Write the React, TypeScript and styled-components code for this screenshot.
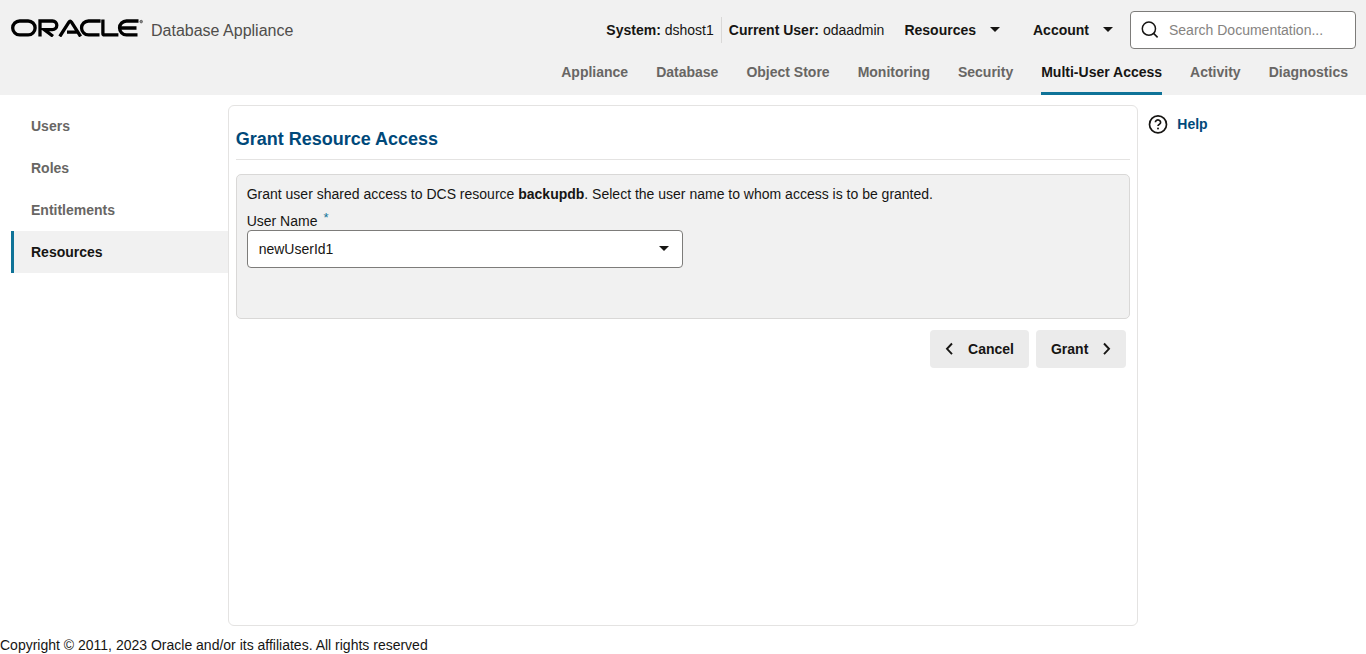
import React from "react";
import styled, { createGlobalStyle } from "styled-components";

const GlobalStyle = createGlobalStyle`
  *, *::before, *::after { box-sizing: border-box; }
  body {
    margin: 0;
    background: #fff;
    color: #161513;
    font-family: "Liberation Sans", Arial, sans-serif;
    font-size: 14px;
    line-height: 20px;
  }
  button, input, select { font: inherit; color: inherit; }
`;

const Page = styled.div`
  display: flex;
  flex-direction: column;
  min-height: 100vh;
`;

const Header = styled.header`
  background: #f1f1f1;
`;

const TopBar = styled.div`
  display: flex;
  justify-content: space-between;
  padding: 11px 10px 0 11px;
`;

const Brand = styled.div`
  display: flex;
  align-items: center;
  gap: 8px;
  height: 38px;
`;

const Logo = styled.svg`
  display: block;
  margin-bottom: 4px;
`;

const ProductName = styled.span`
  padding-top: 2px;
  color: #4f4d4b;
  font-size: 16px;
`;

const Tools = styled.div`
  display: flex;
  align-items: center;
`;

const Fact = styled.span<{ $divided?: boolean }>`
  padding: 3px 7px;
  border-right: ${(p) => (p.$divided ? "1px solid #d9d8d7" : "0")};
`;

const MenuButton = styled.button`
  display: flex;
  align-items: center;
  gap: 13px;
  height: 38px;
  padding: 0 13px;
  border: 0;
  background: none;
  font-weight: 700;
`;

const Menus = styled.div`
  display: flex;
  gap: 6px;
  margin-right: 3px;
`;

const SearchBox = styled.label`
  display: flex;
  align-items: center;
  gap: 10px;
  width: 226px;
  height: 38px;
  padding: 0 10px;
  border: 1px solid #7d7c7a;
  border-radius: 4px;
  background: #fff;
`;

const SearchInput = styled.input`
  flex: 1;
  min-width: 0;
  padding: 0;
  border: 0;
  outline: 0;
  background: none;
  &::placeholder { color: #858381; opacity: 1; }
`;

const Tabs = styled.nav`
  display: flex;
  justify-content: flex-end;
  gap: 28px;
  padding-right: 18px;
`;

const Tab = styled.a<{ $active?: boolean }>`
  padding: 13px 0 10px;
  border-bottom: 3px solid ${(p) => (p.$active ? "#0f7398" : "transparent")};
  color: ${(p) => (p.$active ? "#161513" : "#686664")};
  font-weight: 700;
  text-decoration: none;
`;

const Body = styled.div`
  display: grid;
  grid-template-columns: 2fr 8fr 2fr;
  flex: 1;
  padding-top: 10px;
`;

const SideNav = styled.nav`
  display: flex;
  flex-direction: column;
  padding-left: 11px;
`;

const SideLink = styled.a<{ $active?: boolean }>`
  padding: 11px 17px;
  border-left: 3px solid ${(p) => (p.$active ? "#0f7398" : "transparent")};
  background: ${(p) => (p.$active ? "#f1f1f1" : "none")};
  color: ${(p) => (p.$active ? "#161513" : "#686664")};
  font-weight: 700;
  text-decoration: none;
`;

const Panel = styled.main`
  padding: 0 7px;
  border: 1px solid #e4e3e2;
  border-radius: 6px;
`;

const Title = styled.h1`
  margin: 0 0 14px;
  padding: 21px 0 8px;
  border-bottom: 1px solid #e4e3e2;
  color: #00497a;
  font-size: 18px;
  line-height: 24px;
`;

const Card = styled.section`
  min-height: 145px;
  padding: 9px 10px;
  border: 1px solid #d9d8d7;
  border-radius: 5px;
  background: #f1f1f1;
`;

const Intro = styled.p`
  margin: 0 0 7px;
`;

const FieldLabel = styled.label`
  display: flex;
  gap: 6px;
  height: 19px;
`;

const Required = styled.span`
  color: #0f7398;
  font-size: 13px;
  line-height: 14px;
`;

const SelectWrap = styled.div`
  display: grid;
  align-items: center;
  width: 50%;
  & > * { grid-area: 1 / 1; }
  & > svg { justify-self: end; margin-right: 13px; pointer-events: none; }
`;

const Select = styled.select`
  appearance: none;
  width: 100%;
  height: 38px;
  padding: 0 36px 0 11px;
  border: 1px solid #7d7c7a;
  border-radius: 4px;
  background: #fff;
`;

const Actions = styled.div`
  display: flex;
  justify-content: flex-end;
  gap: 7px;
  padding: 11px 4px;
`;

const ActionButton = styled.button`
  display: flex;
  align-items: center;
  gap: 14px;
  height: 38px;
  padding: 0 15px;
  border: 0;
  border-radius: 4px;
  background: #ebebeb;
  font-weight: 700;
`;

const Aside = styled.aside`
  padding: 9px 10px;
`;

const HelpLink = styled.a`
  display: inline-flex;
  align-items: center;
  gap: 9px;
  color: #00497a;
  font-weight: 700;
  text-decoration: none;
`;

const Footer = styled.footer`
  padding-top: 10px;
  line-height: 18px;
`;

const OracleLogo = () => (
  <Logo width="132" height="18" viewBox="0 0 132 18" role="img" aria-label="Oracle">
    <g fill="none" stroke="#000" strokeWidth="3.3">
      <rect x="1.7" y="2" width="22.4" height="13.9" rx="6.95" />
      <path d="M29 17.5V2h12.5a4.2 4.2 0 0 1 0 8.6H33.2l8.8 6.6" />
      <path d="M48.8 17.5L57.9 3.1q1.3-1.8 2.6 0L69.6 17.5M56 13.2h10" />
      <path d="M89.6 2H77.5a6.95 6.95 0 0 0 0 13.9h11" />
      <path d="M91.9.5V14.4q0 1.5 1.5 1.5h14" />
      <path d="M127.5 2h-12a6.95 6.95 0 0 0 0 13.9h11M109 9h16.5" />
    </g>
    <circle cx="130.2" cy="2.6" r="1.3" fill="#8a8a8a" stroke="#555" strokeWidth="0.8" />
  </Logo>
);

const Caret = () => (
  <svg width="12" height="6" viewBox="0 0 12 6" aria-hidden="true">
    <path d="M1 0h10L6 5z" fill="#161513" />
  </svg>
);

const SearchIcon = () => (
  <svg width="18" height="18" viewBox="0 0 18 18" fill="none" stroke="#161513" strokeWidth="1.5" aria-hidden="true">
    <circle cx="7.9" cy="7.7" r="6.6" />
    <path d="M12.6 12.4l4 4" />
  </svg>
);

const Chevron = ({ left }: { left?: boolean }) => (
  <svg width="9" height="14" viewBox="0 0 9 14" fill="none" stroke="#161513" strokeWidth="1.9" aria-hidden="true">
    <path d={left ? "M7 1.5L2 6.8l5 5.3" : "M2 1.5L7 6.8l-5 5.3"} />
  </svg>
);

const HelpIcon = () => (
  <svg width="20" height="20" viewBox="0 0 20 20" fill="none" stroke="#161513" strokeWidth="1.7" aria-hidden="true">
    <circle cx="10" cy="10.4" r="8.5" />
    <path d="M7.4 8.3a2.6 2.3 0 1 1 4.2 1.8c-1 .6-1.6.9-1.6 2" />
    <circle cx="10" cy="14.4" r="1" fill="#161513" stroke="none" />
  </svg>
);

const tabs = [
  "Appliance", "Database", "Object Store", "Monitoring",
  "Security", "Multi-User Access", "Activity", "Diagnostics",
];
const sections = ["Users", "Roles", "Entitlements", "Resources"];

export default function App() {
  return (
    <Page>
      <GlobalStyle />
      <Header>
        <TopBar>
          <Brand>
            <OracleLogo />
            <ProductName>Database Appliance</ProductName>
          </Brand>
          <Tools>
            <Fact $divided><b>System:</b> dshost1</Fact>
            <Fact><b>Current User:</b> odaadmin</Fact>
            <Menus>
              <MenuButton type="button">Resources <Caret /></MenuButton>
              <MenuButton type="button">Account <Caret /></MenuButton>
            </Menus>
            <SearchBox>
              <SearchIcon />
              <SearchInput type="text" aria-label="Search Documentation" placeholder="Search Documentation..." />
            </SearchBox>
          </Tools>
        </TopBar>
        <Tabs>
          {tabs.map((t) => (
            <Tab key={t} href="#" $active={t === "Multi-User Access"}>{t}</Tab>
          ))}
        </Tabs>
      </Header>
      <Body>
        <SideNav>
          {sections.map((s) => (
            <SideLink key={s} href="#" $active={s === "Resources"}>{s}</SideLink>
          ))}
        </SideNav>
        <Panel>
          <Title>Grant Resource Access</Title>
          <Card>
            <Intro>
              Grant user shared access to DCS resource <b>backupdb</b>. Select the user name to whom access is to be granted.
            </Intro>
            <FieldLabel htmlFor="user-name">
              User Name <Required>*</Required>
            </FieldLabel>
            <SelectWrap>
              <Select id="user-name" defaultValue="newUserId1">
                <option>newUserId1</option>
              </Select>
              <Caret />
            </SelectWrap>
          </Card>
          <Actions>
            <ActionButton type="button"><Chevron left /> Cancel</ActionButton>
            <ActionButton type="button">Grant <Chevron /></ActionButton>
          </Actions>
        </Panel>
        <Aside>
          <HelpLink href="#"><HelpIcon /> Help</HelpLink>
        </Aside>
      </Body>
      <Footer>Copyright © 2011, 2023 Oracle and/or its affiliates. All rights reserved</Footer>
    </Page>
  );
}
